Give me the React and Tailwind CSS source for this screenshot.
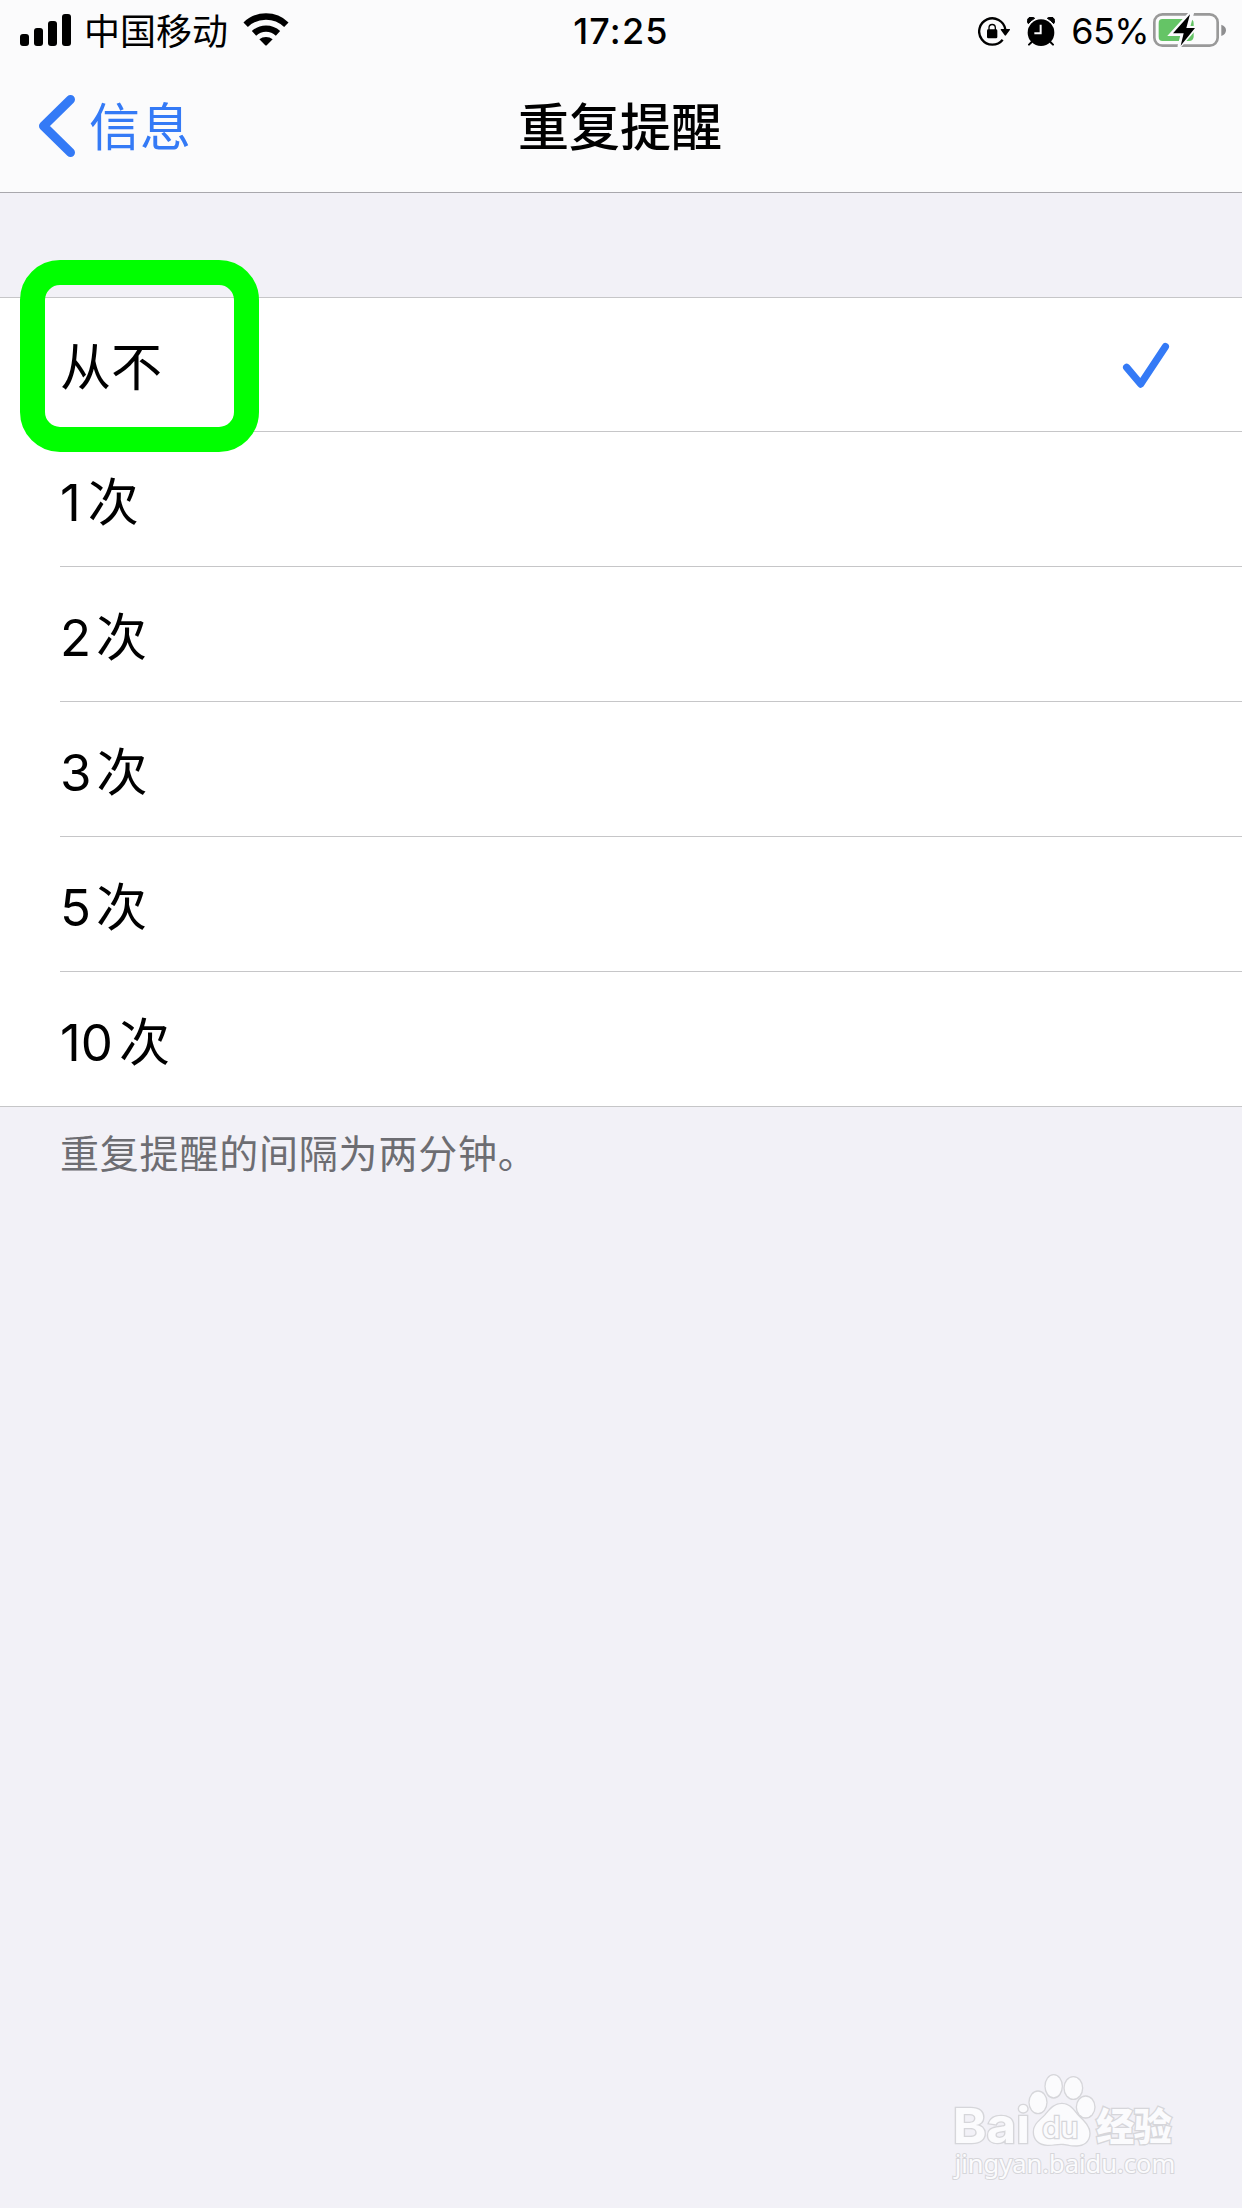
const options = [
  { count: '', label: '从不', selected: true },
  { count: '1', label: '次', gap: 'ml-[7px]' },
  { count: '2', label: '次', gap: 'ml-[5px]' },
  { count: '3', label: '次', gap: 'ml-[5px]' },
  { count: '5', label: '次', gap: 'ml-[5px]' },
  { count: '10', label: '次', gap: 'ml-[6px]' },
];

function SignalIcon() {
  return (
    <svg className="w-[51px] h-8 shrink-0" viewBox="0 0 153 96">
      <rect x="0" y="60" width="27" height="36" rx="9" />
      <rect x="42" y="42" width="27" height="54" rx="9" />
      <rect x="84" y="21" width="27" height="75" rx="9" />
      <rect x="126" y="0" width="27" height="96" rx="9" />
    </svg>
  );
}

function WifiIcon() {
  return (
    <svg className="w-[46px] h-[33px] shrink-0" viewBox="0 0 138 99">
      <g fill="none" stroke="#000" strokeWidth="19">
        <path d="M8 35 A88 88 0 0 1 130 35" />
        <path d="M33 61 A53 53 0 0 1 105 61" />
      </g>
      <path d="M49 79 A31 31 0 0 1 89 79 L72 96 Q69 99 66 96 Z" />
    </svg>
  );
}

function RotationLockIcon() {
  return (
    <svg className="w-8 h-[29px] shrink-0" viewBox="0 0 96 87">
      <path d="M74 68 A39.500 39.500 0 1 1 82 37" fill="none" stroke="#000" strokeWidth="7" />
      <path d="M69 36 H95 Q97 38 95 40 L84 55 Q82 57 80 55 L69 40 Q67 37 69 36 Z" />
      <rect x="27" y="37" width="31" height="27" rx="4" />
      <path d="M33 39 V32 A9.500 9.500 0 0 1 52 32 V39" fill="none" stroke="#000" strokeWidth="4" />
    </svg>
  );
}

function AlarmIcon() {
  return (
    <svg className="w-7 h-[29px] shrink-0" viewBox="0 0 84 87">
      <circle cx="42" cy="47" r="40" />
      <path d="M4 20 A11 11 0 0 1 23 4 Q12 10 4 20 Z M80 20 A11 11 0 0 0 61 4 Q72 10 80 20 Z" stroke="#000" strokeWidth="3" />
      <path d="M14 75 L6 83 M70 75 L78 83" stroke="#000" strokeWidth="6" strokeLinecap="round" />
      <path d="M41 23 V49 H22" fill="none" stroke="#fbfbfd" strokeWidth="6" />
    </svg>
  );
}

function BatteryIcon() {
  return (
    <svg className="w-[74px] h-[34px] shrink-0" viewBox="0 0 222 102">
      <rect x="4" y="4" width="190" height="94" rx="24" fill="none" stroke="#999" strokeWidth="8" />
      <path d="M205 35 Q219 40 219 52 Q219 64 205 69 Z" fill="#8e8e90" />
      <path d="M28 18 H110 Q122 18 122 32 V70 Q122 84 108 84 H28 Q17 84 17 72 V30 Q17 18 28 18 Z" fill="#65c466" />
      <path d="M112 0 L54 64 H88 L78 102 L128 44 H106 L118 0 Z" fill="#fbfbfd" stroke="#fbfbfd" strokeWidth="10" />
      <path d="M111 4 L60 61 H92 L83 98 L126 45 H100 Z" />
    </svg>
  );
}

function StatusBar() {
  return (
    <div className="grid h-[60px] grid-cols-[1fr_auto_1fr] items-center text-[36px] leading-none">
      <div className="flex items-center pl-5">
        <SignalIcon />
        <span className="mt-[3px] ml-[13px]">中国移动</span>
        <span className="ml-[15px] -mt-[2px] flex"><WifiIcon /></span>
      </div>
      <span className="mt-[2px] font-medium tracking-[1.2px]">17:25</span>
      <div className="flex items-center justify-end pr-[15px]">
        <span className="mt-[3px] flex"><RotationLockIcon /></span>
        <span className="mt-[2px] ml-[17px] flex"><AlarmIcon /></span>
        <span className="mt-[2px] ml-4 tracking-[-0.6px]">65%</span>
        <span className="ml-1 flex"><BatteryIcon /></span>
      </div>
    </div>
  );
}

function NavBar() {
  return (
    <div className="grid h-[132px] grid-cols-[1fr_auto_1fr] items-center text-[51px] leading-none">
      <div className="flex items-center pl-[38px] text-[#347af6]">
        <svg className="h-[64px] w-[38px]" viewBox="0 0 38 64">
          <path d="M32.500 5.500 L5.500 32 L32.500 58.500" fill="none" stroke="currentColor" strokeWidth="9" strokeLinecap="round" strokeLinejoin="round" />
        </svg>
        <span className="ml-[13px] pt-[2px]">信息</span>
      </div>
      <h1 className="pr-[2px] pt-[2px] font-medium">重复提醒</h1>
    </div>
  );
}

function Watermark() {
  return (
    <svg className="h-[150px] w-[300px]" viewBox="0 0 900 450">
      <g fill="#fbfbfd" stroke="#d6d6da" strokeWidth="8" paintOrder="stroke">
        <ellipse cx="354" cy="157" rx="25" ry="32" />
        <ellipse cx="401" cy="109" rx="24" ry="33" />
        <ellipse cx="460" cy="114" rx="26" ry="32" />
        <ellipse cx="497" cy="171" rx="26" ry="31" />
        <path d="M426 162 C450 162 462 184 474 197 C492 215 508 230 508 250 C508 276 488 287 468 286 C448 286 440 281 424 281 C406 281 398 285 382 284 C358 283 342 268 342 246 C342 224 360 212 376 196 C390 180 402 162 426 162 Z" />
        <g fontFamily="Inter, sans-serif" fontWeight="700">
          <text x="98" y="279" fontSize="146" textLength="232" lengthAdjust="spacingAndGlyphs">Bai</text>
          <text x="367" y="264" fontSize="88" fontWeight="500" textLength="108" lengthAdjust="spacingAndGlyphs">du</text>
        </g>
        <text x="529" y="271" fontSize="114" fontWeight="900" fontFamily="'Noto Sans CJK SC', sans-serif" textLength="226">经验</text>
        <text x="104" y="370" fontSize="75" fontFamily="'Noto Sans', sans-serif" strokeWidth="6" textLength="662" lengthAdjust="spacingAndGlyphs">jingyan.baidu.com</text>
      </g>
    </svg>
  );
}

export default function App() {
  return (
    <div className="relative flex h-[2208px] w-[1242px] flex-col overflow-hidden bg-[#f2f1f7] font-[Inter,'Noto_Sans_CJK_SC',sans-serif] text-black">
      <header className="h-[193px] shrink-0 border-b border-[#a9a8ad] bg-[#fbfbfc]">
        <StatusBar />
        <NavBar />
      </header>

      <ul className="mt-[104px] border-y border-[#c6c6c8] bg-white text-[51px] leading-none">
        {options.map((option) => (
          <li key={option.count} className="group h-[135px] pl-[60px] first:h-[134px] last:h-[134px]">
            <div className="flex h-full items-center border-b border-[#c6c6c8] pr-[72px] group-last:border-b-0">
              {option.count && <span className="pt-[7px]">{option.count}</span>}
              <span className={option.gap ? `pt-[7px] ${option.gap}` : 'pt-[6px]'}>{option.label}</span>
              {option.selected && (
                <svg className="ml-auto h-[46px] w-[48px]" viewBox="0 0 144 138">
                  <path d="M14 76 L56 126 L130 14" fill="none" stroke="#347af6" strokeWidth="22" strokeLinecap="round" strokeLinejoin="round" />
                </svg>
              )}
            </div>
          </li>
        ))}
      </ul>
      <p className="mt-[26px] pl-[60px] text-[39px] leading-[42px] tracking-[0.8px] text-[#6d6d72]">重复提醒的间隔为两分钟。</p>

      <div className="mt-auto flex justify-end pr-[22px] pb-2">
        <Watermark />
      </div>

      <div className="absolute left-5 top-[260px] h-[192px] w-[239px] rounded-[40px] border-[25px] border-[#00ff00]" />
    </div>
  );
}
